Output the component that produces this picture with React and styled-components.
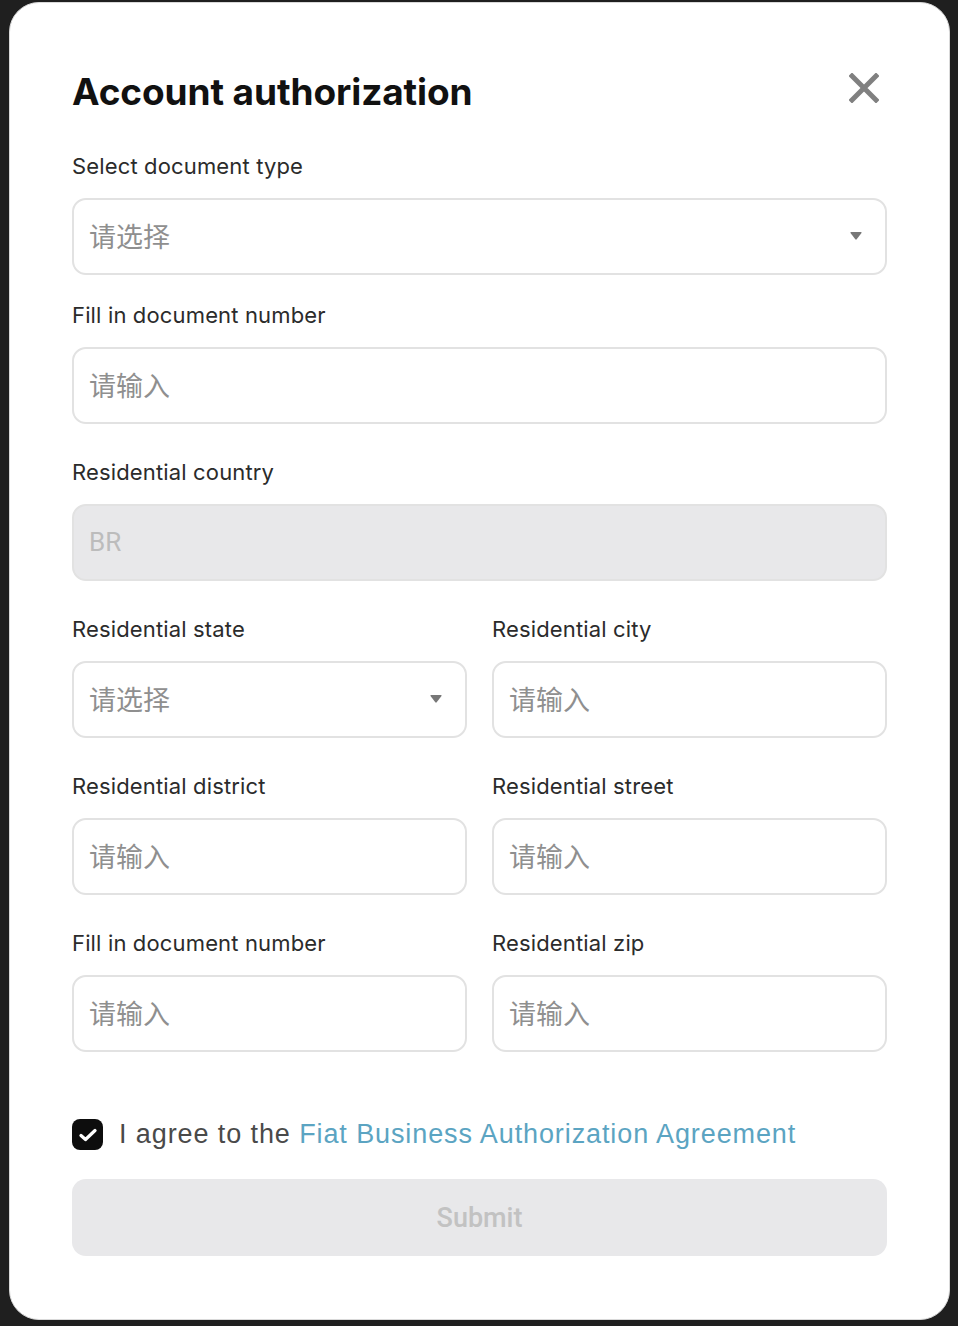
import React from "react";
import styled, { createGlobalStyle } from "styled-components";

const Global = createGlobalStyle`
  html, body { margin: 0; padding: 0; background: #1f1f1f; }
  body { font-family: Inter, "Noto Sans CJK SC", sans-serif; }
  * { box-sizing: border-box; }
`;

const Backdrop = styled.div`
  width: 958px;
  height: 1326px;
  padding: 2px 8px 6px 9px;
  background: #1f1f1f;
`;

const Modal = styled.div`
  width: 941px;
  height: 1318px;
  background: #fff;
  border-radius: 30px;
  border: 1px solid #d9d9d9;
  padding: 59px 62px 0 62px;
  display: flex;
  flex-direction: column;
`;

const Header = styled.div`
  display: flex;
  justify-content: space-between;
  align-items: flex-start;
  height: 60px;
`;

const Title = styled.h1`
  margin: 0;
  font-family: Inter, sans-serif;
  font-weight: 700;
  font-size: 37px;
  line-height: 60px;
  color: #111;
  letter-spacing: -0.1px;
`;

const CloseButton = styled.button`
  border: none;
  background: none;
  padding: 0;
  margin-top: 11px;
  margin-right: 8px;
  width: 30px;
  height: 30px;
  cursor: pointer;
  display: flex;
`;

const Field = styled.div`
  display: flex;
  flex-direction: column;
  margin-top: ${(p) => p.$gap}px;
  min-width: 0;
`;

const Label = styled.label`
  font-family: Inter, sans-serif;
  font-size: 22px;
  line-height: 30px;
  letter-spacing: 0.15px;
  color: #2b2b2b;
  margin-bottom: 17px;
`;

const Box = styled.div`
  height: 77px;
  border: 2px solid #e2e2e2;
  border-radius: 14px;
  background: ${(p) => (p.$disabled ? "#e8e8ea" : "#fff")};
  display: flex;
  align-items: center;
  justify-content: space-between;
  padding: 0 23px 2px 15px;
`;

const Placeholder = styled.span`
  font-family: "Noto Sans CJK SC", sans-serif;
  font-size: 27px;
  color: #8f8f8f;
`;

const DisabledValue = styled.span`
  font-family: Roboto, sans-serif;
  font-size: 26px;
  color: #bcbcbc;
`;

const Row = styled.div`
  display: grid;
  grid-template-columns: 1fr 1fr;
  column-gap: 25px;
`;

const AgreeRow = styled.div`
  display: flex;
  align-items: center;
  gap: 16px;
  margin-top: 67px;
`;

const Check = styled.span`
  width: 31px;
  height: 31px;
  border-radius: 8px;
  background: #0d0d0d;
  display: flex;
  align-items: center;
  justify-content: center;
`;

const AgreeText = styled.span`
  font-family: "Liberation Sans", Arial, sans-serif;
  font-size: 27px;
  letter-spacing: 0.9px;
  color: #4a4a4a;
`;

const Link = styled.a`
  color: #5ba4c2;
  text-decoration: none;
`;

const Submit = styled.button`
  margin-top: 29px;
  height: 77px;
  width: 100%;
  border: none;
  border-radius: 14px;
  background: #e8e8ea;
  color: #c2c2c2;
  font-family: Roboto, sans-serif;
  font-weight: 500;
  font-size: 27px;
`;

const Caret = () => (
  <svg width="12" height="8" viewBox="0 0 12 8">
    <path d="M0.5 1 Q0 0 1.2 0 H10.8 Q12 0 11.5 1 L6.7 7.3 Q6 8 5.3 7.3 Z" fill="#777" />
  </svg>
);

const Select = ({ label, gap }) => (
  <Field $gap={gap}>
    <Label>{label}</Label>
    <Box>
      <Placeholder>请选择</Placeholder>
      <Caret />
    </Box>
  </Field>
);

const Input = ({ label, gap }) => (
  <Field $gap={gap}>
    <Label>{label}</Label>
    <Box>
      <Placeholder>请输入</Placeholder>
    </Box>
  </Field>
);

export default function App() {
  return (
    <>
      <Global />
      <Backdrop>
        <Modal>
          <Header>
            <Title>Account authorization</Title>
            <CloseButton aria-label="close">
              <svg width="30" height="30" viewBox="0 0 30 30">
                <path d="M3 3 L27 27 M27 3 L3 27" stroke="#808080" strokeWidth="5" strokeLinecap="square" />
              </svg>
            </CloseButton>
          </Header>
          <Select label="Select document type" gap={29} />
          <Input label="Fill in document number" gap={25} />
          <Field $gap={33}>
            <Label>Residential country</Label>
            <Box $disabled>
              <DisabledValue>BR</DisabledValue>
            </Box>
          </Field>
          <Row>
            <Select label="Residential state" gap={33} />
            <Input label="Residential city" gap={33} />
          </Row>
          <Row>
            <Input label="Residential district" gap={33} />
            <Input label="Residential street" gap={33} />
          </Row>
          <Row>
            <Input label="Fill in document number" gap={33} />
            <Input label="Residential zip" gap={33} />
          </Row>
          <AgreeRow>
            <Check>
              <svg width="18" height="14" viewBox="0 0 18 14">
                <path d="M2 7.5 L6.5 11.5 L16 2.5" stroke="#fff" strokeWidth="3.2" fill="none" strokeLinecap="round" strokeLinejoin="round" />
              </svg>
            </Check>
            <AgreeText>
              I agree to the <Link>Fiat Business Authorization Agreement</Link>
            </AgreeText>
          </AgreeRow>
          <Submit disabled>Submit</Submit>
        </Modal>
      </Backdrop>
    </>
  );
}
